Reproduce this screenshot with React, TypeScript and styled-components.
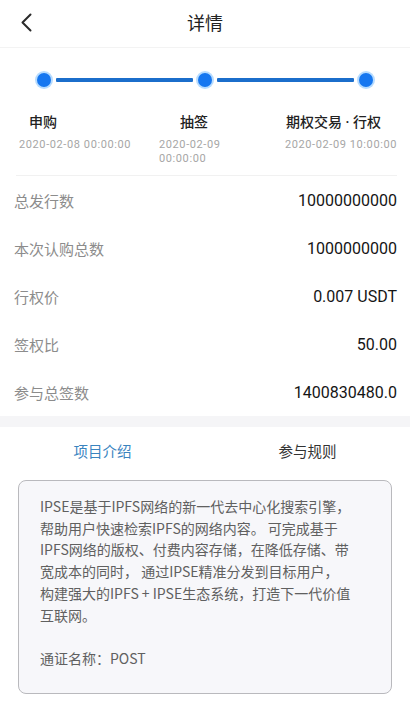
import React from "react";
import styled, { createGlobalStyle } from "styled-components";

const Global = createGlobalStyle`
  html, body { margin: 0; padding: 0; background: #ffffff; }
  body { font-family: "Noto Sans CJK SC", "Noto Sans", sans-serif; }
  * { box-sizing: border-box; }
`;

const Page = styled.div`
  width: 410px;
  min-height: 711px;
  background: #ffffff;
`;

const Header = styled.header`
  height: 48px;
  display: flex;
  align-items: center;
  justify-content: center;
  position: relative;
  border-bottom: 1px solid #f3f3f3;
  padding-bottom: 4px;
`;

const BackButton = styled.button`
  position: absolute;
  left: 18px;
  top: 11px;
  width: 16px;
  height: 22px;
  padding: 0;
  border: none;
  background: transparent;
  display: flex;
  align-items: center;
  justify-content: center;
`;

const Title = styled.h1`
  margin: 0;
  font-size: 18px;
  font-weight: 400;
  color: #222;
  line-height: 24px;
`;

const Progress = styled.section`
  padding: 23px 0 9px;
`;

const Track = styled.div`
  display: flex;
  align-items: center;
  margin: 0 35px;
  height: 18px;
`;

const Dot = styled.span`
  width: 14px;
  height: 14px;
  margin: 2px;
  border-radius: 50%;
  background: #1677f0;
  box-shadow: 0 0 0 2px #b7dcff;
  flex: none;
`;

const Line = styled.span`
  flex: 1;
  height: 4px;
  margin: 0 3px;
  background: #1b6ecb;
  border-radius: 1px;
`;

const Steps = styled.div`
  display: grid;
  grid-template-columns: 140px 66px 1fr;
  padding: 0 13px 0 19px;
  margin-top: 23px;
`;

const Step = styled.div<{ $align: "left" | "right" }>`
  display: flex;
  flex-direction: column;
  align-items: ${(p) => (p.$align === "right" ? "flex-end" : "flex-start")};
  text-align: ${(p) => p.$align};
`;

const StepLabel = styled.div<{ $pl?: number; $pr?: number }>`
  font-family: "Noto Sans", "Noto Sans CJK SC", sans-serif;
  font-size: 14px;
  font-weight: 500;
  color: #222;
  line-height: 20px;
  padding-left: ${(p) => p.$pl ?? 0}px;
  padding-right: ${(p) => p.$pr ?? 0}px;
  white-space: nowrap;
`;

const StepDate = styled.div`
  margin-top: 6px;
  font-family: Roboto, "Noto Sans", sans-serif;
  font-size: 11px;
  letter-spacing: 0.6px;
  line-height: 14px;
  color: #a6a6a6;
`;

const Divider = styled.div`
  height: 1px;
  margin: 0 13px 0 16px;
  background: #f1f1f1;
`;

const InfoList = styled.div`
  padding: 0 13px 0 14px;
`;

const InfoRow = styled.div`
  height: 48px;
  display: flex;
  align-items: center;
  justify-content: space-between;
`;

const InfoLabel = styled.span`
  font-size: 15px;
  color: #8c8c8c;
`;

const InfoValue = styled.span`
  font-family: Roboto, "Noto Sans", sans-serif;
  font-size: 16px;
  color: #151515;
`;

const Band = styled.div`
  height: 11px;
  background: #f5f5f7;
`;

const Tabs = styled.div`
  display: grid;
  grid-template-columns: 1fr 1fr;
  height: 46px;
`;

const Tab = styled.div<{ $active?: boolean }>`
  display: flex;
  align-items: center;
  justify-content: center;
  font-size: 14.5px;
  color: ${(p) => (p.$active ? "#3a84bf" : "#333")};
`;

const Card = styled.div`
  margin: 7px 18px 0;
  padding: 15px 20px 23px 21px;
  border: 1px solid #b9b9bd;
  border-radius: 8px;
  background: #f7f7fa;
  font-size: 14px;
  line-height: 21.7px;
  color: #606060;
`;

const Para = styled.p`
  margin: 0 0 21.7px;
  white-space: nowrap;
  &:last-child { margin-bottom: 0; }
`;

const steps = [
  { label: "申购", date: "2020-02-08 00:00:00", align: "left" as const, pl: 10 },
  { label: "抽签", date: "2020-02-09 00:00:00", align: "left" as const, pl: 21 },
  { label: "期权交易 · 行权", date: "2020-02-09 10:00:00", align: "right" as const, pr: 16 },
];

const rows = [
  ["总发行数", "10000000000"],
  ["本次认购总数", "1000000000"],
  ["行权价", "0.007 USDT"],
  ["签权比", "50.00"],
  ["参与总签数", "1400830480.0"],
];

const introLines = [
  "IPSE是基于IPFS网络的新一代去中心化搜索引擎，",
  "帮助用户快速检索IPFS的网络内容。 可完成基于",
  "IPFS网络的版权、付费内容存储，在降低存储、带",
  "宽成本的同时， 通过IPSE精准分发到目标用户，",
  "构建强大的IPFS + IPSE生态系统，打造下一代价值",
  "互联网。",
];

export default function App() {
  return (
    <Page>
      <Global />
      <Header>
        <BackButton aria-label="返回">
          <svg width="12" height="19" viewBox="0 0 12 19">
            <polyline points="10.5,1.5 2.5,9.5 10.5,17.5" fill="none" stroke="#2a2a2a" strokeWidth="2" strokeLinecap="round" strokeLinejoin="round" />
          </svg>
        </BackButton>
        <Title>详情</Title>
      </Header>

      <Progress>
        <Track>
          <Dot />
          <Line />
          <Dot />
          <Line />
          <Dot />
        </Track>
        <Steps>
          {steps.map((s) => (
            <Step key={s.label} $align={s.align}>
              <StepLabel $pl={s.pl} $pr={s.pr}>{s.label}</StepLabel>
              <StepDate>{s.date}</StepDate>
            </Step>
          ))}
        </Steps>
      </Progress>

      <Divider />

      <InfoList>
        {rows.map(([k, v]) => (
          <InfoRow key={k}>
            <InfoLabel>{k}</InfoLabel>
            <InfoValue>{v}</InfoValue>
          </InfoRow>
        ))}
      </InfoList>

      <Band />

      <Tabs>
        <Tab $active>项目介绍</Tab>
        <Tab>参与规则</Tab>
      </Tabs>

      <Card>
        <Para>
          {introLines.map((l, i) => (
            <React.Fragment key={i}>
              {l}
              {i < introLines.length - 1 && <br />}
            </React.Fragment>
          ))}
        </Para>
        <Para>通证名称：POST</Para>
      </Card>
    </Page>
  );
}
